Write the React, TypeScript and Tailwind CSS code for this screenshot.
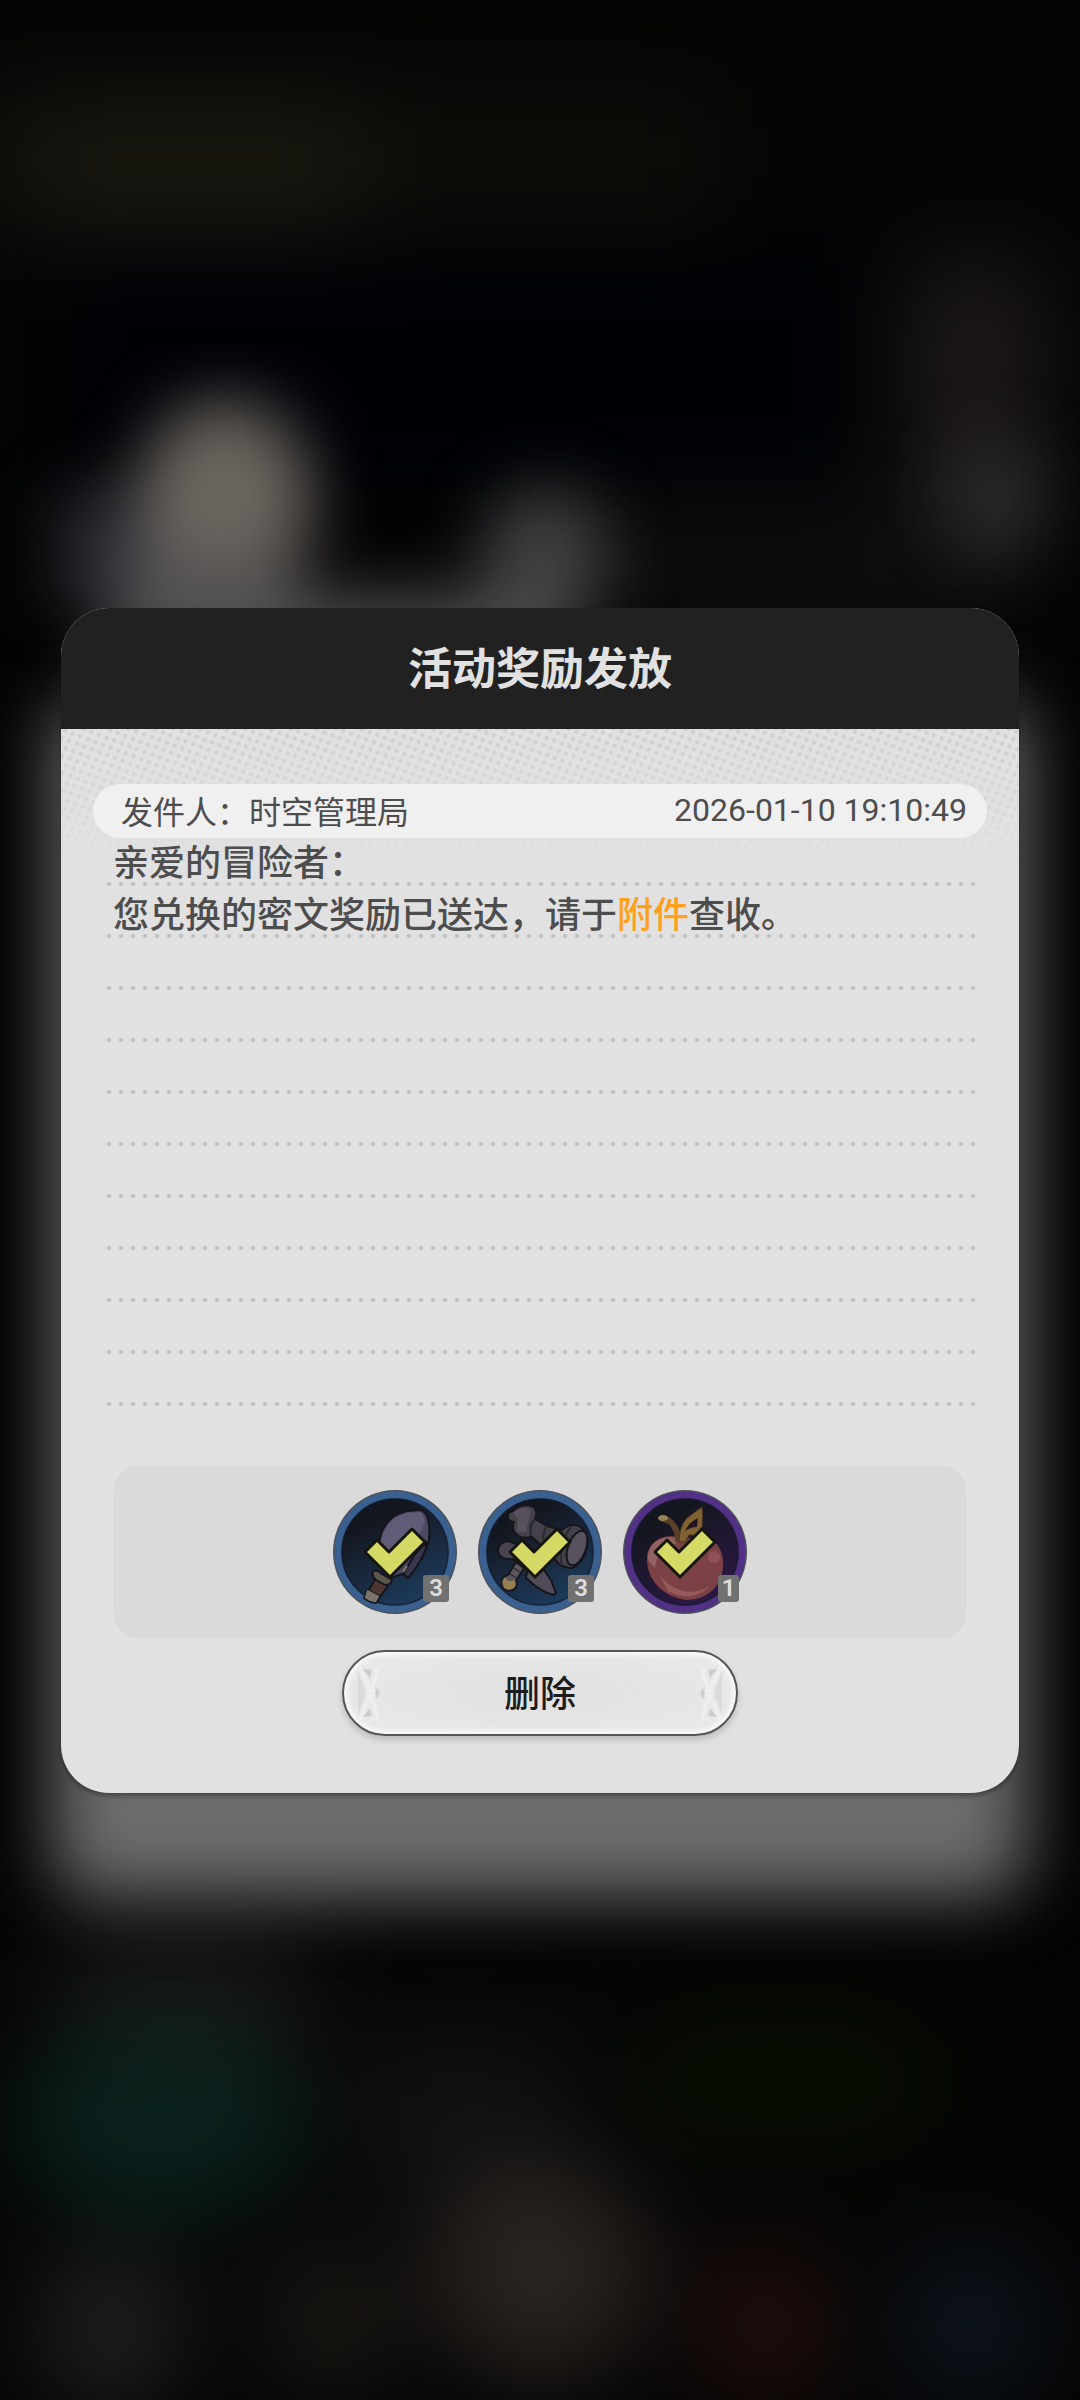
import type { ReactNode } from "react";

type Attachment = {
    name: string;
    count: number;
    tone: "blue" | "purple";
    art: ReactNode;
};

const ShovelArt = () => (
    <g stroke="#14141a" strokeWidth="2" strokeLinejoin="round">
        <path d="M43 88 L56 94 L43 113 Q36 112 31 108Z" fill="#4f3531" />
        <path d="M34 99 L47 106 L43 113 Q36 112 31 108Z" fill="#79746c" strokeWidth="1" />
        <path d="M40 81 Q44 79 49 84 L59 90 Q58 95 52 95 L43 90 Q38 86 40 81Z" fill="#5d564d" />
        <path d="M45 62 C46 40 54 25 74 21 L87 20 Q93 21 95 30 Q98 42 95 54 L90 66 L75 88 L69 84 L58 88Z" fill="#4d4863" />
        <path d="M47 58 C49 38 58 27 74 23 L87 22 Q90 24 92 32 L80 56 L57 78Z" fill="#615b77" stroke="none" />
        <path d="M82 64 L94 52 Q92 68 75 88 L70 84Z" fill="#3a364e" />
        <path d="M74 76 L70 82" stroke="#817a68" />
    </g>
);

const HammerArt = () => (
    <g stroke="#15151a" strokeWidth="2" strokeLinejoin="round">
        <path d="M38 72 L30 85 Q24 86 24 94 Q27 103 35 100 Q40 97 38 91 L46 78Z" fill="#5b555d" />
        <path d="M27 87 Q22 91 26 98 Q31 102 37 97 Q39 92 36 90 Q30 93 27 87Z" fill="#93804f" stroke="none" />
        <path d="M32 84 L40 89 M36 78 L43 83" strokeWidth="1" />
        <path d="M20 61 Q20 52 30 51 L44 56 L50 76 L34 69 Q21 70 20 61Z" fill="#484350" />
        <path d="M49 82 L66 80 L73 90 L78 103 L76 105 Q64 103 48 88Z" fill="#514a59" />
        <path d="M30 28 Q29 22 35 21 Q40 15 50 15 L56 17 Q60 22 57 29 L69 36 L84 40 Q91 33 101 36 Q111 42 109 56 Q106 73 94 78 Q86 78 80 73 L70 62 L53 46 Q47 50 39 45 Q33 40 36 32 Q31 32 30 28Z" fill="#45414b" />
        <path d="M35 23 Q43 16 53 19 L48 42 L39 42 L40 29Z" fill="#57515e" stroke="none" />
        <path d="M57 29 Q51 34 53 46 M69 36 Q63 44 67 54" fill="none" stroke="#2a2830" />
        <ellipse cx="99" cy="58" rx="9" ry="18" transform="rotate(20 99 58)" fill="#57525e" />
        <path d="M94 36 Q82 48 83 75" fill="none" stroke="#2b2932" />
    </g>
);

const FruitArt = () => (
    <g strokeLinejoin="round">
        <path d="M62 50 C79 41 100 50 100 72 C101 96 84 110 63 110 C41 107 24 91 24 69 C24 48 48 41 62 50Z" fill="#7c4145" />
        <path d="M25 70 C24 50 43 44 56 49 L46 62 Q34 60 32 78Z" fill="#9b7070" opacity=".7" />
        <path d="M36 84 Q58 112 87 96 Q68 114 45 101Z" fill="#a36c68" opacity=".6" />
        <circle cx="91" cy="67" r="6" fill="#905259" />
        <path d="M52 52 Q53 43 46 34 L37 31 L35 27 Q41 24 46 27 Q57 35 59 50Z" fill="#5b4029" />
        <ellipse cx="40" cy="28" rx="5" ry="3" fill="#968155" />
        <path d="M56 52 Q56 37 64 28 L79 17 Q80 25 79 37 L73 45 L66 45 L62 52Z" fill="#816332" stroke="#493720" strokeWidth="1" />
        <path d="M62 41 Q65 33 75 28 L74 37 Q68 37 62 41Z" fill="#211322" />
    </g>
);

const attachments: Attachment[] = [
    { name: "铲子", count: 3, tone: "blue", art: <ShovelArt /> },
    { name: "锤子", count: 3, tone: "blue", art: <HammerArt /> },
    { name: "果实", count: 1, tone: "purple", art: <FruitArt /> },
];

const RULED_LINES = 11;

// Out-of-focus game scene behind the mail
function Backdrop() {
    return (
        <svg
            viewBox="0 0 1080 2400"
            preserveAspectRatio="none"
            aria-hidden="true"
            className="absolute inset-0 size-full"
        >
            <defs>
                <filter
                    id="scene-blur"
                    x="-20%"
                    y="-20%"
                    width="140%"
                    height="140%"
                    colorInterpolationFilters="sRGB"
                >
                    <feGaussianBlur stdDeviation="32" />
                </filter>
                <filter
                    id="scene-blur-wide"
                    x="-20%"
                    y="-20%"
                    width="140%"
                    height="140%"
                    colorInterpolationFilters="sRGB"
                >
                    <feGaussianBlur stdDeviation="48" />
                </filter>
            </defs>
            <rect width="1080" height="2400" fill="#040404" />
            <g filter="url(#scene-blur-wide)">
                <rect x="-100" y="-100" width="1280" height="2600" fill="#040404" />
                <rect x="-60" y="90" width="780" height="130" fill="#0d0e09" />
                <rect x="30" y="100" width="330" height="130" fill="#191911" />
                <rect x="70" y="260" width="780" height="230" fill="#000107" />
                <rect x="560" y="500" width="460" height="140" fill="#0d0d0d" />
                <rect x="910" y="260" width="130" height="280" fill="#1e1a19" />
                <rect x="60" y="1930" width="240" height="140" fill="#181816" />
                <ellipse cx="160" cy="2120" rx="150" ry="100" fill="#0a201c" />
                <rect x="350" y="2020" width="220" height="180" fill="#101010" />
                <ellipse cx="780" cy="2080" rx="170" ry="70" fill="#070e02" />
                <ellipse cx="540" cy="2270" rx="110" ry="110" fill="#2a2420" />
                <ellipse cx="110" cy="2330" rx="75" ry="80" fill="#202020" />
                <ellipse cx="330" cy="2320" rx="70" ry="80" fill="#1a1713" />
                <ellipse cx="765" cy="2325" rx="70" ry="80" fill="#210f0c" />
                <ellipse cx="970" cy="2325" rx="75" ry="80" fill="#0d151e" />
            </g>
            <g filter="url(#scene-blur)">
                <rect x="60" y="490" width="110" height="120" fill="#2b2b35" />
                <ellipse cx="225" cy="500" rx="88" ry="100" fill="#6b655f" />
                <rect x="120" y="560" width="180" height="90" fill="#524f50" />
                <ellipse cx="545" cy="555" rx="66" ry="66" fill="#404040" />
                <rect x="110" y="597" width="460" height="80" fill="#505050" />
                <ellipse cx="995" cy="500" rx="45" ry="60" fill="#2a2a29" />
            </g>
        </svg>
    );
}

function Halftone() {
    return (
        <svg aria-hidden="true" className="absolute inset-x-0 top-0 h-[140px] w-full mask-b-from-0%">
            <defs>
                <pattern
                    id="halftone"
                    width="12"
                    height="11"
                    patternUnits="userSpaceOnUse"
                    patternTransform="rotate(-22)"
                >
                    <circle cx="3" cy="3" r="2.3" fill="#cfcfcf" />
                    <circle cx="9" cy="8.5" r="2.3" fill="#cfcfcf" />
                </pattern>
            </defs>
            <rect width="100%" height="100%" fill="url(#halftone)" />
        </svg>
    );
}

function ClaimedCheck() {
    return (
        <path
            d="M32 62 L44 50 L56 62 L79 39 L92 52 L57 87Z"
            fill="#d5d966"
            stroke="#16160f"
            strokeWidth="3"
            strokeLinejoin="round"
        />
    );
}

function AttachmentItem({ name, count, tone, art }: Attachment) {
    const ring = tone === "blue" ? "#3a6090" : "#513085";
    const inner = tone === "blue" ? "#1d3a5a" : "#2b1843";

    return (
        <li className="relative size-[124px]">
            <svg viewBox="0 0 124 124" className="size-full" role="img" aria-label={name}>
                <defs>
                    <linearGradient id={`fill-${name}`} x1="0" y1="0" x2=".5" y2="1">
                        <stop offset=".3" stopColor="#14161f" />
                        <stop offset="1" stopColor={inner} />
                    </linearGradient>
                </defs>
                <circle cx="62" cy="62" r="62" fill="#4c5058" />
                <circle cx="62" cy="62" r="57" fill={`url(#fill-${name})`} stroke={ring} strokeWidth="7" />
                <circle cx="62" cy="62" r="53" fill="none" stroke="#141c2d" strokeWidth="2" opacity=".6" />
                {art}
                <ClaimedCheck />
            </svg>
            <span
                className={`absolute bottom-3 right-2 flex h-[27px] items-center justify-center rounded-[3px] bg-[#717171] font-['Roboto',sans-serif] text-[24px] font-semibold leading-none text-[#dedede] ${
                    count === 1 ? "w-[21px]" : "w-[26px]"
                }`}
            >
                {count}
            </span>
        </li>
    );
}

function ButtonOrnament({ className }: { className: string }) {
    return (
        <svg viewBox="0 0 30 56" aria-hidden="true" className={className}>
            <path d="M0 6 Q-8 28 0 50 L8 28Z" fill="#dadada" />
            <path d="M2 2 Q8 20 17 28 Q8 36 2 54 M20 2 Q16 22 10 28 Q16 34 20 54" fill="none" stroke="#eeeeee" strokeWidth="4" />
            <path d="M5 4 L14 5 L12 13Z M5 52 L14 51 L12 43Z M19 23 L22 28 L19 34 L17 28Z" fill="#cccccc" />
        </svg>
    );
}

export default function App() {
    return (
        <main className="relative flex min-h-screen items-center overflow-hidden bg-[#040404] px-[61px] font-['Noto_Sans_CJK_SC',sans-serif]">
            <Backdrop />

            <div className="relative w-full">
                <div
                    aria-hidden="true"
                    className="absolute -inset-x-2 -bottom-[104px] top-[90px] rounded-[40px] bg-[#6c6c6c] blur-[34px]"
                />

                <section
                    role="dialog"
                    aria-labelledby="mail-title"
                    className="relative overflow-hidden rounded-[48px] bg-[#e1e1e1] text-[#4d4d4d] shadow-[0_3px_4px_#00000055]"
                >
                    <header className="flex h-[121px] items-center justify-center bg-[#212121] pb-1">
                        <h1 id="mail-title" className="text-[44px] font-bold leading-none text-[#e1e1e1]">
                            活动奖励发放
                        </h1>
                    </header>

                    <div className="relative px-8 pb-[57px] pt-[55px]">
                        <Halftone />

                        <div className="relative flex h-[54px] items-center justify-between rounded-full bg-[#f0f0f0] pb-0.5 pl-7 pr-5 text-[32px] leading-none">
                            <p>发件人：时空管理局</p>
                            <time dateTime="2026-01-10T19:10:49" className="font-['Roboto',sans-serif]">
                                2026-01-10 19:10:49
                            </time>
                        </div>

                        <div className="relative ml-2.5 mr-3 -mt-1">
                            <div aria-hidden="true" className="absolute inset-0">
                                {Array.from({ length: RULED_LINES }, (_, i) => (
                                    <div key={i} className="flex h-[52px] items-end">
                                        <div className="h-1 w-full bg-[radial-gradient(circle,#bdbdbd_1px,transparent_3px)] bg-size-[12px_4px]" />
                                    </div>
                                ))}
                            </div>
                            <div className="relative min-h-[572px] px-2.5 text-[36px] font-medium leading-[52px]">
                                <p>亲爱的冒险者：</p>
                                <p>
                                    您兑换的密文奖励已送达，请于<span className="text-[#ff9f1a]">附件</span>查收。
                                </p>
                            </div>
                        </div>

                        <ul className="relative mx-[21px] mt-[60px] flex justify-center gap-[21px] rounded-3xl bg-[#dadada] py-6">
                            {attachments.map((item) => (
                                <AttachmentItem key={item.name} {...item} />
                            ))}
                        </ul>

                        <button
                            type="button"
                            className="relative mx-auto mt-3 flex h-[86px] w-[396px] items-center justify-between rounded-full border-2 border-[#555555] bg-[radial-gradient(ellipse,#e2e2e2_20%,#e8e8e8_75%)] px-3.5 text-[36px] font-medium leading-none text-[#1c1c1c] shadow-[0_4px_6px_#bbbbbb,inset_0_0_4px_3px_#fafafa]"
                        >
                            <ButtonOrnament className="h-14 w-[30px]" />
                            <span className="pb-1">删除</span>
                            <ButtonOrnament className="h-14 w-[30px] -scale-x-100" />
                        </button>
                    </div>
                </section>
            </div>
        </main>
    );
}
